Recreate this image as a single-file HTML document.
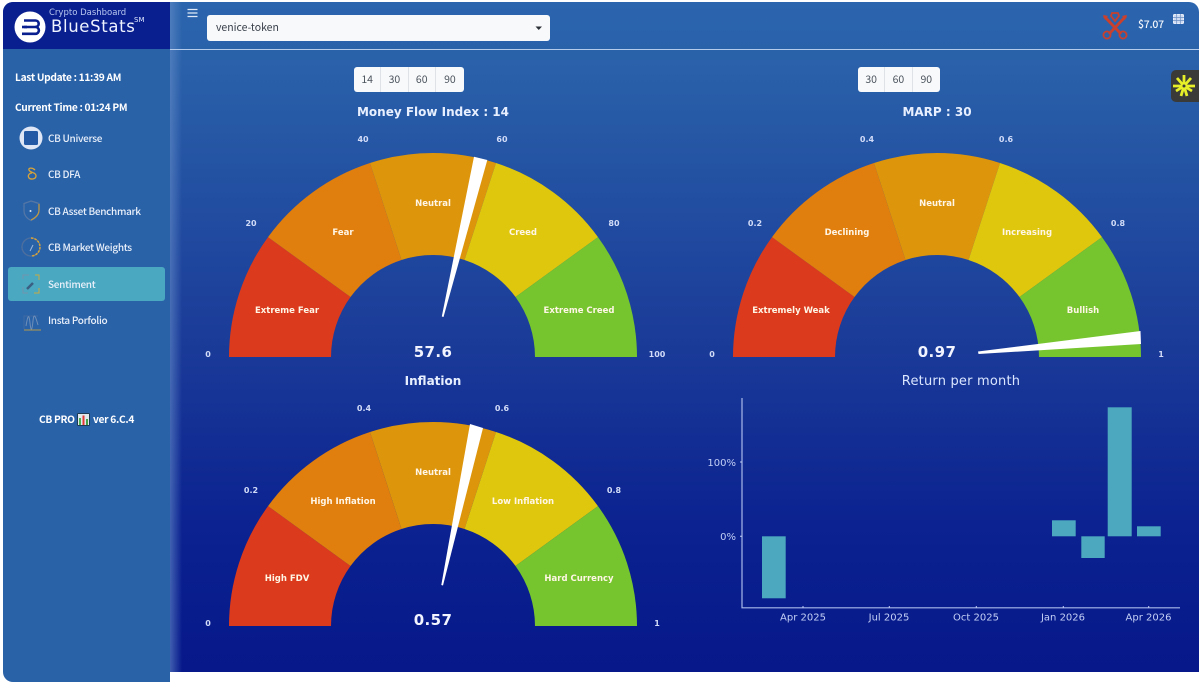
<!DOCTYPE html>
<html>
<head>
<meta charset="utf-8">
<style>
html,body{margin:0;padding:0;width:1200px;height:683px;overflow:hidden;background:#fff}
*{box-sizing:border-box}
.abs{position:absolute}
#frame{position:absolute;left:3px;top:2px;width:1196px;height:680px;border-radius:10px;overflow:hidden;background:#fff}
#main{position:absolute;left:167px;top:0;width:1029px;height:670px;background:linear-gradient(180deg,#2b65ad 0,#2a62aa 8%,#1a3a98 52%,#0b2290 78%,#07188a 100%)}
#shadow{position:absolute;left:0;top:0;width:12px;height:670px;background:linear-gradient(90deg,rgba(100,140,200,.6),rgba(90,130,190,0))}
#side{position:absolute;left:0;top:0;width:167px;height:680px;background:#2a62a8}
#logo{position:absolute;left:0;top:0;width:167px;height:47px;background:#0a1f8f}
#hr{position:absolute;left:170px;top:49px;width:1029px;height:1px;background:#b4cbec}
.n{position:absolute;left:48px;font:500 10px/14px "Noto Sans CJK SC",sans-serif;letter-spacing:-.3px;color:#e9f0fa;white-space:nowrap}
.st{position:absolute;left:15px;font:700 10.2px/14px "Noto Sans CJK SC",sans-serif;letter-spacing:-.3px;color:#fff;white-space:nowrap}
#active{position:absolute;left:8px;top:267px;width:157px;height:34px;border-radius:3px;background:#4aa8c0}
.sel{position:absolute;left:207px;top:15px;width:343px;height:26px;background:#f8f9fb;border-radius:3px;color:#39404a;font:400 10.5px/26px "Noto Sans CJK SC",sans-serif;padding-left:9px}
.btns{position:absolute;display:flex;height:25px;background:#f8f9fb;border-radius:3px;color:#4b535c;font:400 10.5px/25px "Noto Sans CJK SC",sans-serif;text-align:center}
.btns span{display:block;width:27.3px;border-right:1px solid #dfe3e8}
.btns span:last-child{border:none}
#spark{position:absolute;left:1171px;top:70px;width:28px;height:32px;background:#3a3a38;border-radius:5px 0 0 5px}
svg text{font-family:"DejaVu Sans",sans-serif}
</style>
</head>
<body>
<div id="frame">
  <div id="main"><div id="shadow"></div></div>
  <div id="side"></div>
  <div id="logo"></div>
</div>
<div id="hr"></div>

<svg class="abs" style="left:0;top:0" width="170" height="50" viewBox="0 0 170 50">
  <circle cx="30" cy="27" r="15.500" fill="#fff"/>
  <path d="M24 20.500h11.500a3.200 3.200 0 0 1 0 6.400M24 27h11.500a3.400 3.400 0 0 1 0 6.800H22" fill="none" stroke="#0a1f8f" stroke-width="2.600"/>
  <path d="M22 27h5" stroke="#0a1f8f" stroke-width="2.600"/>
  <text x="49" y="15" font-size="8.500" fill="#b8c8f0">Crypto Dashboard</text>
  <text x="51" y="32" font-size="16.500" fill="#eef3ff" letter-spacing=".65">BlueStats</text>
  <text x="134" y="22" font-size="7" fill="#dfe8ff">SM</text>
</svg>

<div class="st" style="top:70px">Last Update : 11:39 AM</div>
<div class="st" style="top:100px">Current Time : 01:24 PM</div>
<div id="active"></div>
<div class="n" style="top:131px">CB Universe</div>
<div class="n" style="top:167px">CB DFA</div>
<div class="n" style="top:204px">CB Asset Benchmark</div>
<div class="n" style="top:240px">CB Market Weights</div>
<div class="n" style="top:277px">Sentiment</div>
<div class="n" style="top:313px">Insta Porfolio</div>
<div class="st" style="top:412px;left:39px">CB PRO</div>
<svg class="abs" style="left:77px;top:413px" width="13" height="13" viewBox="0 0 13 13">
  <rect width="13" height="13" rx="1.500" fill="#1d3a52"/><rect x="1" y="1" width="11" height="11" fill="#dfe9ee"/>
  <rect x="2" y="5" width="2" height="7" fill="#4caf50"/><rect x="5.500" y="2.500" width="2" height="9.500" fill="#e53935"/><rect x="9" y="6" width="2" height="6" fill="#43a047"/>
</svg>
<div class="st" style="top:412px;left:93px">ver 6.C.4</div>

<svg class="abs" style="left:0;top:120px" width="60" height="220" viewBox="0 120 60 220">
  <circle cx="31" cy="138" r="11.500" fill="#dfe7f6"/><rect x="24" y="131" width="14" height="14" rx="1.500" fill="#245aa5"/>
  <path d="M35 170c-3-3-7-2-6 0 1 3 7 2 7 6 0 3-5 4-7 2-2-3 1-5 3-5" fill="none" stroke="#d9a437" stroke-width="1.300"/>
  <path d="M31 201l8 2.500v7c0 5-4 8-8 10-4-2-7-5-7-10v-7z" fill="none" stroke="#5577a5" stroke-width="1.200"/><path d="M39 204v6c0 5-4 8-8 10" fill="none" stroke="#c49a3c" stroke-width="1.200"/><circle cx="30.500" cy="211" r="1" fill="#dce6f5"/>
  <circle cx="31" cy="247" r="9" fill="none" stroke="#4d6f9e" stroke-width="1.300"/><path d="M31 238a9 9 0 0 1 0 18" fill="none" stroke="#d9a437" stroke-width="1.500" stroke-dasharray="2.500 1"/><path d="M30 251l3-6" stroke="#9fb9dc" stroke-width="1"/>
  <path d="M23 279v-4h6M23 287v6h5" fill="none" stroke="#7393ad" stroke-width="1"/><path d="M35 275h4v5M39 288v5h-5" fill="none" stroke="#c8aa45" stroke-width="1"/><path d="M27 289l6-6" stroke="#3a5f82" stroke-width="2.500"/>
  <path d="M24 329v-13h14" fill="none" stroke="#3f6ba5" stroke-width="1"/><path d="M26 326c2-12 3-12 4-3s2 8 3-2 3-3 5 4" fill="none" stroke="#6f8fb8" stroke-width="1"/><path d="M24 330h17" stroke="#b69a4d" stroke-width="1"/>
</svg>

<svg class="abs" style="left:187px;top:8px" width="11" height="10"><path d="M0.500 1.500h10M0.500 5h10M0.500 8.500h10" stroke="#dfe9f7" stroke-width="1.300"/></svg>
<div class="sel">venice-token</div>
<svg class="abs" style="left:535px;top:26px" width="8" height="5"><path d="M0.500 0.500h6.500L3.750 4z" fill="#2b2f36"/></svg>

<svg class="abs" style="left:1100px;top:10px" width="30" height="32" viewBox="0 0 30 32">
  <g fill="none" stroke="#c9402c">
    <path d="M4 6L21 24M26 6L9 24" stroke-width="2.800"/>
    <circle cx="7" cy="25" r="3.600" stroke-width="1.800"/><circle cx="23" cy="25" r="3.600" stroke-width="1.800"/>
    <path d="M12 3h6l1 3-4 5-4-5z" stroke-width="1.800"/>
  </g>
  <path d="M3 5l5 1-3 4zM27 5l-5 1 3 4z" fill="#c9402c"/>
</svg>
<div class="abs" style="left:1138px;top:18px;font:500 10.500px/14px 'Noto Sans CJK SC',sans-serif;letter-spacing:-.25px;color:#f2f6fc">$7.07</div>
<svg class="abs" style="left:1173px;top:14px" width="11" height="10"><rect x=".5" y=".5" width="10" height="9" rx="1" fill="#cfdcf2" stroke="#e7eefa"/><path d="M0 3.500h11M0 6.500h11M3.700 0v10M7.300 0v10" stroke="#6c8fc4" stroke-width=".7"/></svg>

<div id="spark">
<svg width="28" height="32" viewBox="0 0 28 32"><g stroke="#e6ef28" stroke-width="2.800"><path d="M13 16V5M13 16l7-8M13 16l-7-8M13 16h11M13 16H2M13 16l8 5M13 16l-8 5M13 16l3 10M13 16l-3 10"/></g><circle cx="13" cy="16" r="1.500" fill="#3a3a38"/></svg>
</div>

<div class="btns" style="left:354px;top:67px;width:110px"><span>14</span><span>30</span><span>60</span><span style="flex:1">90</span></div>
<div class="btns" style="left:858px;top:67px;width:82px"><span>30</span><span>60</span><span style="flex:1">90</span></div>

<svg class="abs" style="left:0;top:0" width="1200" height="683" viewBox="0 0 1200 683">
  <defs>
    <g id="arcs">
      <path d="M-204 0A204 204 0 0 1-165-119.900L-82.500-59.950A102 102 0 0 0-102 0Z" fill="#db3a1d"/>
      <path d="M-165-119.900A204 204 0 0 1-63-194L-31.500-97A102 102 0 0 0-82.500-59.950Z" fill="#e07e0e"/>
      <path d="M-63-194A204 204 0 0 1 63-194L31.500-97A102 102 0 0 0-31.500-97Z" fill="#dd950c"/>
      <path d="M63-194A204 204 0 0 1 165-119.900L82.500-59.950A102 102 0 0 0 31.500-97Z" fill="#dfc70e"/>
      <path d="M165-119.900A204 204 0 0 1 204 0L102 0A102 102 0 0 0 82.500-59.950Z" fill="#76c52e"/>
    </g>
  </defs>

  <text x="433" y="116" text-anchor="middle" font-size="12" font-weight="700" fill="#e8f0ff">Money Flow Index : 14</text>
  <text x="937" y="116" text-anchor="middle" font-size="12" font-weight="700" fill="#e8f0ff">MARP : 30</text>
  <text x="433" y="385" text-anchor="middle" font-size="12" font-weight="700" fill="#e8f0ff">Inflation</text>
  <text x="961" y="385" text-anchor="middle" font-size="13" fill="#dbe6ff" letter-spacing=".2">Return per month</text>

  <g transform="translate(433 357)">
    <use href="#arcs"/>
    <g font-size="8.500" font-weight="700" fill="#fff6e6" text-anchor="middle">
      <text x="-146" y="-44">Extreme Fear</text><text x="-90" y="-122">Fear</text><text x="0" y="-151">Neutral</text><text x="90" y="-122">Creed</text><text x="146" y="-44">Extreme Creed</text>
    </g>
    <g font-size="8" font-weight="700" fill="#d2dcf8" text-anchor="middle">
      <text x="-225" y="0">0</text><text x="-182" y="-131">20</text><text x="-70" y="-215">40</text><text x="69" y="-215">60</text><text x="181" y="-131">80</text><text x="224" y="0">100</text>
    </g>
    <text x="0" y="0" text-anchor="middle" font-size="15" font-weight="700" fill="#f2f5ff" letter-spacing=".4">57.6</text>
  </g>
  <path d="M441.800 316.500L474 156.700 487.300 160 443.500 317Z" fill="#fff"/>

  <g transform="translate(937 357)">
    <use href="#arcs"/>
    <g font-size="8.500" font-weight="700" fill="#fff6e6" text-anchor="middle">
      <text x="-146" y="-44">Extremely Weak</text><text x="-90" y="-122">Declining</text><text x="0" y="-151">Neutral</text><text x="90" y="-122">Increasing</text><text x="146" y="-44">Bullish</text>
    </g>
    <g font-size="8" font-weight="700" fill="#d2dcf8" text-anchor="middle">
      <text x="-225" y="0">0</text><text x="-182" y="-131">0.2</text><text x="-70" y="-215">0.4</text><text x="69" y="-215">0.6</text><text x="181" y="-131">0.8</text><text x="224" y="0">1</text>
    </g>
    <text x="0" y="0" text-anchor="middle" font-size="15" font-weight="700" fill="#f2f5ff" letter-spacing=".4">0.97</text>
  </g>
  <path d="M978 351.500L1140.500 331 1141 344 978.500 354Z" fill="#fff"/>

  <g transform="translate(433 626)">
    <use href="#arcs"/>
    <g font-size="8.500" font-weight="700" fill="#fff6e6" text-anchor="middle">
      <text x="-146" y="-45">High FDV</text><text x="-90" y="-122">High Inflation</text><text x="0" y="-151">Neutral</text><text x="90" y="-122">Low Inflation</text><text x="146" y="-45">Hard Currency</text>
    </g>
    <g font-size="8" font-weight="700" fill="#d2dcf8" text-anchor="middle">
      <text x="-225" y="0">0</text><text x="-182" y="-133">0.2</text><text x="-69" y="-215">0.4</text><text x="69" y="-215">0.6</text><text x="181" y="-133">0.8</text><text x="224" y="0">1</text>
    </g>
    <text x="0" y="-1" text-anchor="middle" font-size="15" font-weight="700" fill="#f2f5ff" letter-spacing=".4">0.57</text>
  </g>
  <path d="M441.300 585L470 424 483 428 443 585.500Z" fill="#fff"/>

  <g fill="#4ba8bf">
    <rect x="762" y="536.300" width="23.700" height="62"/>
    <rect x="1052" y="520.300" width="23.700" height="16"/>
    <rect x="1081.300" y="536.300" width="23.400" height="21.700"/>
    <rect x="1107.700" y="407.300" width="24" height="129"/>
    <rect x="1137" y="526.300" width="23.700" height="10"/>
  </g>
  <path d="M742 398V607.800H1180" fill="none" stroke="#a9b9ea" stroke-width="1.200"/>
  <path d="M740 462h2M740 536.300h2M803 606v2M889.300 606v2M976.300 606v2M1063.300 606v2M1148.700 606v2" stroke="#c0cdf5" stroke-width="1"/>
  <g font-size="10" fill="#c3cff5" text-anchor="middle">
    <text x="803" y="620.500">Apr 2025</text><text x="889" y="620.500">Jul 2025</text><text x="976" y="620.500">Oct 2025</text><text x="1063" y="620.500">Jan 2026</text><text x="1148.500" y="620.500">Apr 2026</text>
    <text x="736" y="466" text-anchor="end">100%</text><text x="736" y="540" text-anchor="end">0%</text>
  </g>
</svg>
</body>
</html>
